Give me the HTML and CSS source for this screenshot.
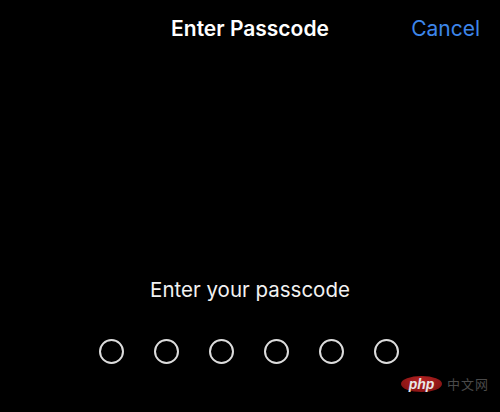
FILE: index.html
```html
<!DOCTYPE html>
<html>
<head>
<meta charset="utf-8">
<link rel="stylesheet" href="styles.css">
</head>
<body>
<div class="screen">
  <header class="nav">
    <div class="nav-side"></div>
    <h1 class="title">Enter Passcode</h1>
    <div class="nav-side nav-right"><span class="cancel">Cancel</span></div>
  </header>
  <main class="content">
    <p class="prompt">Enter your passcode</p>
    <div class="dots">
      <span class="dot"></span><span class="dot"></span><span class="dot"></span>
      <span class="dot"></span><span class="dot"></span><span class="dot"></span>
    </div>
  </main>
  <div class="watermark">
    <span class="php">php</span><span class="cn">中文网</span>
  </div>
</div>
</body>
</html>
```
FILE: styles.css
```css
* { box-sizing: border-box; }
html, body { margin: 0; padding: 0; background: #000; }
body { width: 500px; height: 412px; overflow: hidden; font-family: Inter, "Noto Sans", sans-serif; }
.screen { position: relative; width: 500px; height: 412px; display: flex; flex-direction: column; }
.nav { display: grid; grid-template-columns: 1fr auto 1fr; align-items: center; height: 56px; padding: 0 20px; }
.title { margin: 0; color: #fff; font-size: 21px; font-weight: 600; letter-spacing: 0; }
.nav-right { display: flex; justify-content: flex-end; }
.cancel { color: #3d86ea; font-size: 21px; font-weight: 400; }
.content { display: flex; flex-direction: column; align-items: center; padding-top: 219px; }
.prompt { margin: 0; color: #f2f2f2; font-size: 20.5px; font-weight: 400; line-height: 30px; }
.dots { display: flex; gap: 30px; margin-top: 34px; padding-right: 3px; }
.dot { width: 25px; height: 25px; border: 2px solid #dcdcdc; border-radius: 50%; }
.watermark { position: absolute; left: 401px; top: 374px; display: flex; align-items: center; gap: 5px; }
.php { display: inline-block; width: 41px; height: 16px; border-radius: 50%; background: radial-gradient(ellipse at 50% 30%, #b52222, #7a1010); color: #e8e8e8; font-family: "Liberation Sans", sans-serif; font-style: italic; font-weight: 700; font-size: 14px; line-height: 16px; text-align: center; }
.cn { color: #4a4a4a; font-family: "Noto Sans CJK SC", sans-serif; font-size: 13px; letter-spacing: 1px; }
```
